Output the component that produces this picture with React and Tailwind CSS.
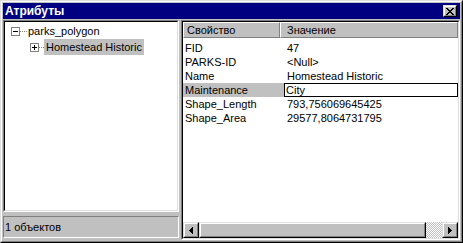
const Raised = ({ className = "", children }) => (
  <div className={"border border-t-[#dfdfdf] border-l-[#dfdfdf] border-r-black border-b-black " + className}>
    <div className="w-full h-full border border-t-white border-l-white border-r-[#808080] border-b-[#808080] bg-[#c0c0c0] flex items-center justify-center">
      {children}
    </div>
  </div>
);

const Arrow = ({ dir }) => (
  <svg width="4" height="7" viewBox="0 0 4 7" shapeRendering="crispEdges">
    {dir === "left" ? <polygon points="4,0 0,3.5 4,7" fill="black" /> : <polygon points="0,0 4,3.5 0,7" fill="black" />}
  </svg>
);

const TreeBox = ({ plus }) => (
  <svg width="9" height="9" viewBox="0 0 9 9" shapeRendering="crispEdges" className="shrink-0">
    <rect x="0.5" y="0.5" width="8" height="8" fill="white" stroke="#808080" />
    <rect x="2" y="4" width="5" height="1" fill="black" />
    {plus && <rect x="4" y="2" width="1" height="5" fill="black" />}
  </svg>
);

export default function App() {
  const rows = [
    ["FID", "47"],
    ["PARKS-ID", "<Null>"],
    ["Name", "Homestead Historic"],
    ["Maintenance", "City", true],
    ["Shape_Length", "793,756069645425"],
    ["Shape_Area", "29577,8064731795"],
  ];
  return (
    <div className="w-[463px] h-[243px] bg-[#c0c0c0] border border-t-[#dfdfdf] border-l-[#dfdfdf] border-r-black border-b-black font-['Liberation_Sans',Arial,sans-serif] text-[11px] text-black leading-none">
      <div className="h-full border border-t-white border-l-white border-r-[#808080] border-b-[#808080] p-px flex flex-col">
        <div className="h-4 shrink-0 bg-[#000080] flex items-center justify-between pl-[2px] pr-[3px]">
          <span className="text-white font-bold text-[12px]">Атрибуты</span>
          <Raised className="w-[14px] h-[12px]">
            <svg width="8" height="7" viewBox="0 0 8 7" shapeRendering="crispEdges">
              <path d="M0 0h2v1h-2zM6 0h2v1h-2zM1 1h2v1h-2zM5 1h2v1h-2zM2 2h4v1h-4zM3 3h2v1h-2zM2 4h4v1h-4zM1 5h2v1h-2zM5 5h2v1h-2zM0 6h2v1h-2zM6 6h2v1h-2z" fill="black" />
            </svg>
          </Raised>
        </div>
        <div className="flex-1 flex mt-px min-h-0">
          <div className="w-[176px] shrink-0 flex flex-col">
            <div className="flex-1 border border-t-[#808080] border-l-[#808080] border-r-white border-b-white">
              <div className="h-full border border-t-black border-l-black border-r-[#dfdfdf] border-b-[#dfdfdf] bg-white pt-[2px]">
                <div className="h-[15px] flex items-center pl-[6px]">
                  <TreeBox />
                  <div className="w-[7px] border-t border-dotted border-[#808080]" />
                  <span className="ml-px">parks_polygon</span>
                </div>
                <div className="h-[16px] flex items-center pl-[25px]">
                  <TreeBox plus />
                  <div className="w-[5px] border-t border-dotted border-[#808080]" />
                  <span className="h-[16px] bg-[#c0c0c0] px-[2px] flex items-center">Homestead Historic</span>
                </div>
              </div>
            </div>
            <div className="h-[22px] mt-[4px] mb-[2px] border border-t-[#808080] border-l-[#808080] border-r-white border-b-white flex items-center pl-px">
              1 объектов
            </div>
          </div>
          <div className="w-[2px] shrink-0" />
          <div className="flex-1 border border-t-[#808080] border-l-[#808080] border-r-white border-b-white">
            <div className="h-full border border-t-black border-l-black border-r-[#dfdfdf] border-b-[#dfdfdf] bg-white flex flex-col">
              <div className="h-[16px] flex shrink-0">
                <div className="w-[97px] border border-t-white border-l-white border-r-[#808080] border-b-[#808080] bg-[#c0c0c0] flex items-center pl-[3px]">Свойство</div>
                <div className="flex-1 border border-t-white border-l-white border-r-[#808080] border-b-[#808080] bg-[#c0c0c0] flex items-center pl-[6px]">Значение</div>
              </div>
              <div className="flex-1 pt-[3px]">
                {rows.map(([k, v, sel]) => (
                  <div key={k} className="h-[14px] flex">
                    <div className={"w-[101px] flex items-center pl-[2px] " + (sel ? "bg-[#c0c0c0]" : "")}>{k}</div>
                    {sel ? (
                      <div className="flex-1 border border-black flex items-center pl-px">{v}</div>
                    ) : (
                      <div className="flex-1 flex items-center pl-[3px]">{v}</div>
                    )}
                  </div>
                ))}
              </div>
              <div className="h-4 flex shrink-0">
                <Raised className="w-4 h-4"><Arrow dir="left" /></Raised>
                <Raised className="flex-1 h-4" />
                <div className="w-4 h-4 bg-[repeating-conic-gradient(#c0c0c0_0_25%,#ffffff_0_50%)] bg-[length:2px_2px]" />
                <Raised className="w-4 h-4"><Arrow dir="right" /></Raised>
              </div>
            </div>
          </div>
        </div>
      </div>
    </div>
  );
}
